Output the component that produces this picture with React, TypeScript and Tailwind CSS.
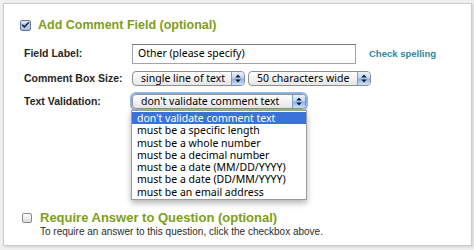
import { Check } from 'lucide-react';

const uiFont = { fontFamily: '"Noto Sans", "Lucida Grande", sans-serif' };

function Arrows() {
  return (
    <svg width="6" height="9" viewBox="0 0 6 9" className="block">
      <path d="M3 0.5 L5.7 3.6 L0.3 3.6 Z" fill="#1a1a1a" />
      <path d="M3 8.5 L5.7 5.4 L0.3 5.4 Z" fill="#1a1a1a" />
    </svg>
  );
}

function AquaSelect({
  text,
  width,
  focused,
}: {
  text: string;
  width: string;
  focused?: boolean;
}) {
  return (
    <div
      className={
        'flex items-center h-[15px] rounded-[4px] border border-[#8f8f8f] bg-gradient-to-b from-white to-[#e6e6e6] overflow-hidden ' +
        width +
        (focused ? ' shadow-[0_0_0_2px_#8db4e6]' : '')
      }
    >
      <span
        className="flex-1 pl-[8px] text-[10.5px] leading-[13px] font-normal text-black whitespace-nowrap overflow-hidden"
        style={uiFont}
      >
        {text}
      </span>
      <span className="flex items-center justify-center w-[13px] h-full bg-[linear-gradient(to_bottom,#eaf2fd_0%,#bcd5f4_48%,#86b0ea_52%,#cfe2f9_100%)] border-l border-[#7f9cc6]">
        <Arrows />
      </span>
    </div>
  );
}

const opciones = [
  "don't validate comment text",
  'must be a specific length',
  'must be a whole number',
  'must be a decimal number',
  'must be a date (MM/DD/YYYY)',
  'must be a date (DD/MM/YYYY)',
  'must be an email address',
];

function App() {
  return (
    <div
      className="w-[474px] h-[250px] bg-[#efefef] pt-[3px] pl-[3px]"
      style={{ fontFamily: '"Liberation Sans", Arial, sans-serif' }}
    >
      <div className="relative w-[469px] h-[243px] bg-white border border-[#cbcbcb] shadow-[1px_1px_2px_rgba(0,0,0,0.12)]">
        <div className="flex items-center gap-[7px] pl-[16px] pt-[14px]">
          <span className="flex items-center justify-center w-[11px] h-[11px] rounded-[2px] border border-[#6c7891] bg-gradient-to-b from-[#d9e6f8] to-[#9fbde8]">
            <Check size={10} strokeWidth={4} color="#1a2340" />
          </span>
          <h1 className="text-[12.5px] font-bold text-[#7e9e1a] leading-[14px]">
            Add Comment Field (optional)
          </h1>
        </div>

        <div className="flex flex-col pl-[20px] pt-[12px] text-[10.5px] font-bold text-[#262626]">
          <div className="flex items-center h-[20px]">
            <span className="w-[108px]">Field Label:</span>
            <div
              className="w-[224px] h-[20px] border border-[#a5a5a5] border-t-[#7a7a7a] flex items-center pl-[5px] text-[10.5px] font-normal text-black"
              style={uiFont}
            >
              Other (please specify)
            </div>
            <span className="ml-[13px] text-[9.5px] text-[#2b8aa3]">Check spelling</span>
          </div>

          <div className="flex items-center h-[15px] mt-[7px]">
            <span className="w-[108px]">Comment Box Size:</span>
            <AquaSelect text="single line of text" width="w-[113px]" />
            <div className="w-[3px]" />
            <AquaSelect text="50 characters wide" width="w-[123px]" />
          </div>

          <div className="flex items-center h-[15px] mt-[8px]">
            <span className="w-[108px]">Text Validation:</span>
            <AquaSelect
              text="don't validate comment text"
              width="w-[174px]"
              focused
            />
          </div>
        </div>

        <ul
          className="absolute left-[127px] top-[106px] w-[176px] py-[1px] bg-white border border-[#9d9d9d] shadow-[0_3px_6px_rgba(0,0,0,0.3)] text-[10.5px] text-black"
          style={uiFont}
        >
          {opciones.map((o, i) => (
            <li
              key={o}
              className={
                'h-[12.3px] leading-[12.3px] pl-[5px] ' +
                (i === 0 ? 'bg-[#3a73d8] text-white' : '')
              }
            >
              {o}
            </li>
          ))}
        </ul>

        <div className="flex items-start gap-[8px] pl-[18px] pt-[101px]">
          <span className="mt-[3px] w-[10px] h-[10px] rounded-[2px] border border-[#8a8a8a] bg-gradient-to-b from-white to-[#dcdcdc]" />
          <div>
            <h2 className="text-[13px] font-bold text-[#7e9e1a] leading-[15px]">
              Require Answer to Question (optional)
            </h2>
            <p className="text-[10px] text-[#2b2b2b] leading-[12px] mt-[1px]">
              To require an answer to this question, click the checkbox above.
            </p>
          </div>
        </div>
      </div>
    </div>
  );
}

export default App;
